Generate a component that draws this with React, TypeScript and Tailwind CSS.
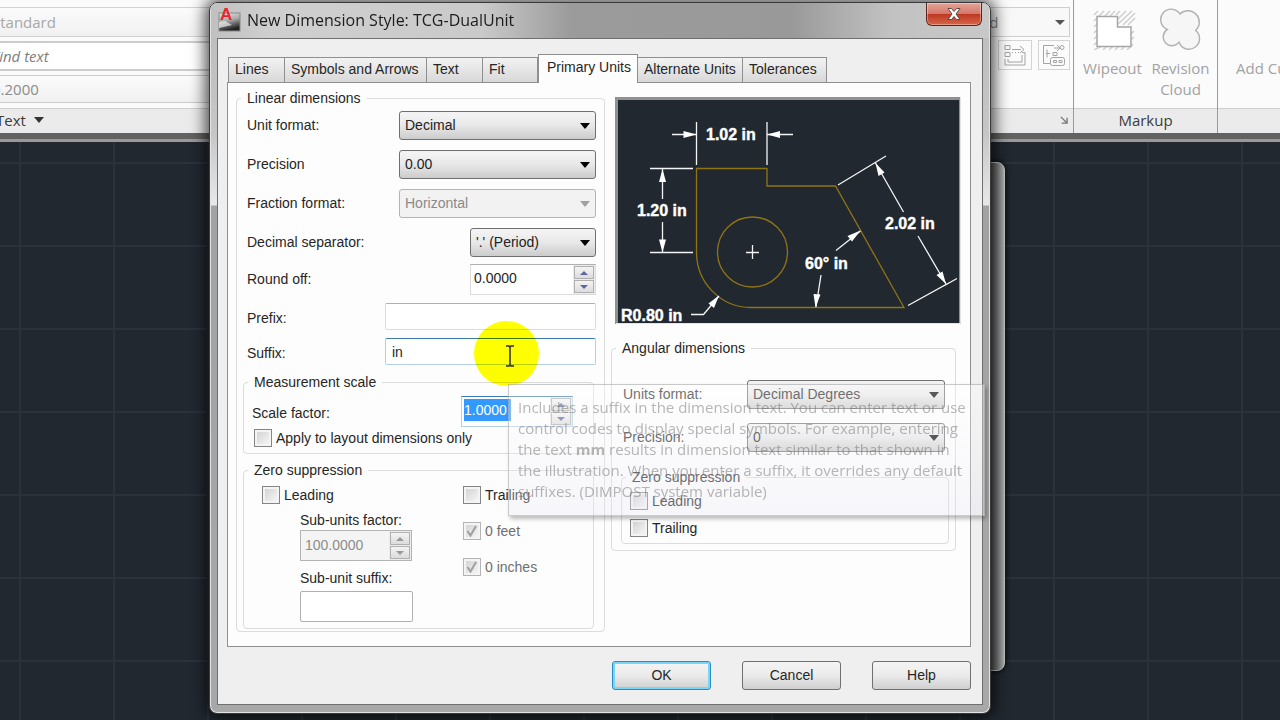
import type { ReactNode } from "react";

const FONT = "font-['Liberation_Sans',Arial,sans-serif]";
const UI_FONT = "font-['Open_Sans','Noto_Sans',sans-serif]";

function Group({ title, className = "", body, children }: { title: string; className?: string; body: string; children: ReactNode }) {
  return (
    <fieldset className={`min-w-0 rounded border border-[#dcdcdc] ${className}`}>
      <legend className="ml-1 px-1.5 leading-4">{title}</legend>
      <div className={body}>{children}</div>
    </fieldset>
  );
}

function Combo({ id, value, width, disabled }: { id: string; value: string; width: string; disabled?: boolean }) {
  return (
    <div className={`relative ${width}`}>
      <select
        id={id}
        disabled={disabled}
        defaultValue={value}
        className={`h-[29px] w-full appearance-none rounded-[3px] border pl-[5px] pr-6 outline-none ${
          disabled
            ? "border-[#b4b4b4] bg-[#f2f2f2] text-[#8a8a8a] opacity-100"
            : "border-[#707070] bg-linear-to-b from-[#f3f3f3] from-10% via-[#e8e8e8] via-50% to-[#cccccc] text-[#222]"
        }`}
      >
        <option>{value}</option>
      </select>
      <svg
        className={`pointer-events-none absolute right-1.5 top-3 ${disabled ? "fill-[#a0a0a0]" : "fill-black"}`}
        width="10"
        height="6"
        viewBox="0 0 10 6"
        aria-hidden="true"
      >
        <path d="M0 0h10L5 6z" />
      </svg>
    </div>
  );
}

function SpinButtons({ label, disabled }: { label: string; disabled?: boolean }) {
  const button = "flex h-[13px] w-5 items-center justify-center border border-[#b0b0b0] bg-linear-to-b from-[#f4f4f4] to-[#dcdcdc]";
  const arrow = disabled ? "fill-[#999]" : "fill-[#5a67a0]";
  return (
    <div className="flex shrink-0 flex-col justify-between bg-[#ececec] p-px">
      <button type="button" aria-label={`Increase ${label}`} disabled={disabled} className={button}>
        <svg className={arrow} width="8" height="4" viewBox="0 0 8 4"><path d="M0 4h8L4 0z" /></svg>
      </button>
      <button type="button" aria-label={`Decrease ${label}`} disabled={disabled} className={button}>
        <svg className={arrow} width="8" height="4" viewBox="0 0 8 4"><path d="M0 0h8L4 4z" /></svg>
      </button>
    </div>
  );
}

function Check({ label, checked, disabled }: { label: string; checked?: boolean; disabled?: boolean }) {
  return (
    <label className={`flex h-[18px] items-center gap-1 ${disabled ? "text-[#6f6f6f]" : ""}`}>
      <span className="relative flex size-[18px] shrink-0">
        <input
          type="checkbox"
          defaultChecked={checked}
          disabled={disabled}
          className={`size-[18px] appearance-none border bg-linear-to-br from-[#cfcfcf] to-[#fafafa] shadow-[inset_0_0_0_2px_#f4f4f4] ${
            disabled ? "border-[#b4b4b4]" : "border-[#858585]"
          }`}
        />
        {checked && (
          <svg className="pointer-events-none absolute inset-0" width="18" height="18" viewBox="0 0 18 18" fill="none" stroke="#a0a0a0" strokeWidth="2">
            <path d="M4.500 9l3 4.500L13 4" />
          </svg>
        )}
      </span>
      {label}
    </label>
  );
}

function Row({ id, label, height, low, children }: { id: string; label: string; height: string; low?: boolean; children: ReactNode }) {
  return (
    <div className={`flex items-center justify-between ${height}`}>
      <label htmlFor={id} className={low ? "pt-1" : ""}>{label}</label>
      {children}
    </div>
  );
}

function Preview() {
  return (
    <svg viewBox="616 97 346 227" className="block w-full" role="img" aria-label="Dimension style preview">
      <rect x="616" y="97" width="346" height="227" fill="#8c9191" />
      <rect x="619" y="100" width="341" height="223" fill="#212830" />
      <path d="M961.500 97v226.500H617" fill="none" stroke="#e4e4e4" />
      <g fill="none" stroke="#8f7414" strokeWidth="1.300">
        <path d="M697.500 252V168.500H768V186h68.500L905 307.500H752C722 307.500 697.500 283 697.500 252" />
        <circle cx="753.500" cy="252" r="35" />
      </g>
      <g fill="none" stroke="#f4f4f4" strokeWidth="1.300">
        <path d="M697.500 122v43M768 122v43M673 134.500h24M768 134.500h26" />
        <path d="M651 168.500h43M651 252.500h43M663.500 169v30M663.500 222v30" />
        <path d="M839 185l48-29M909 305.500l49-27M876.500 163l28 49M919 236l28 48" />
        <path d="M861.500 231L837 250.500M817 307l5-32M692 314.500h12.500L720 296" />
        <path d="M747 252.500h13M753.500 245v14" />
      </g>
      <g fill="#fff">
        <path d="M697.500 134.500l-13-3.500v7zM768 134.500l13-3.500v7z" />
        <path d="M663.500 169l-3.500 13h7zM663.500 252.500l-3.500-13h7z" />
        <path d="M876.500 163l3 13 6-3.500zM947 284l-9.500-9 6-3.500z" />
        <path d="M861.500 230.500l-8.500 11-4.500-5.500zM816.500 307.500l-2-13.500 7 .5zM720 295.500l-5 12.500-5.500-4.500z" />
      </g>
      <g className="font-['Liberation_Sans',Arial,sans-serif] text-[16px] font-bold" fill="#fff" stroke="#fff" strokeWidth="0.400">
        <text x="707" y="140">1.02 in</text>
        <text x="638" y="216">1.20 in</text>
        <text x="886" y="229">2.02 in</text>
        <text x="806" y="269">60° in</text>
        <text x="622" y="321">R0.80 in</text>
      </g>
    </svg>
  );
}

function RibbonTool({ label, children }: { label: ReactNode; children: ReactNode }) {
  return (
    <button type="button" className="flex w-16 flex-col items-center gap-2 text-center leading-[21px] text-[#a2a2a2]">
      {children}
      <span>{label}</span>
    </button>
  );
}

function Ribbon() {
  const strip = "flex h-[25px] items-center border-t border-[#cfcfcf] bg-[#ebebeb] pb-0.5 text-[#3c3c3c]";
  return (
    <div className={`flex h-[133px] bg-[#fbfbfc] text-[15px] ${UI_FONT}`}>
      <section className="flex min-w-0 flex-1 flex-col border-r border-[#9a9a9a]">
        <div className="flex flex-1 justify-between pt-[7px]">
          <div className="flex w-[300px] flex-col gap-1 text-[#a8a8a8]">
            <div className="flex h-[30px] items-center border-y border-[#d2d2d2] bg-linear-to-b from-[#fbfbfb] to-[#f1f1f1]">
              <span className="-ml-2">Standard</span>
            </div>
            <div className="flex h-[30px] items-center border-y-2 border-[#cccccc] bg-white italic text-[#808080]">
              <span className="-ml-2">Find text</span>
            </div>
            <div className="flex h-7 items-center border-y border-[#cccccc] bg-linear-to-b from-[#fbfbfb] to-[#f1f1f1]">
              <span className="-ml-2 text-[#8c8c8c]">0.2000</span>
            </div>
          </div>
          <div className="mr-[3px] flex w-[170px] flex-col gap-[3px]">
            <div className="flex h-[30px] items-center justify-between border border-[#cfcfcf] bg-[#f8f8f8] pl-[82px] pr-1 text-[#888]">
              <span>rd</span>
              <svg width="10" height="5" viewBox="0 0 10 5" fill="#555"><path d="M0 0h10L5 5z" /></svg>
            </div>
            <div className="flex h-[30px] justify-end gap-1.5">
              <button type="button" aria-label="Dimension break" className="flex w-[34px] items-center justify-center border border-[#d4d4d4]">
                <svg width="24" height="24" viewBox="0 0 24 24" fill="none" stroke="#a4a4a4" strokeWidth="1">
                  <path d="M2 2.500h5v4H2zM2 9.500h5v4H2zM9 6.500h9M17 3l4 3.500-4 3.500M2 16v6h20V9.500h-3M5 16v3h14v-7" />
                  <path d="M9 9.500h8" strokeDasharray="1 2" />
                </svg>
              </button>
              <button type="button" aria-label="Adjust spacing" className="flex w-8 items-center justify-center border border-[#d4d4d4]">
                <svg width="24" height="24" viewBox="0 0 24 24" fill="none" stroke="#a4a4a4" strokeWidth="1">
                  <path d="M12 2.500H1.500v18H8M5 6.500v8M4 10.500h4M11 9.500h4v3h-4zM15 2l3 3-3 3M12 5h6" />
                  <circle cx="20" cy="4.500" r="2" />
                  <rect x="8.500" y="14.500" width="14" height="8" rx="2" />
                  <path d="M11.500 17.500h3v2h-3zM17 17.500h3v2h-3z" />
                </svg>
              </button>
            </div>
          </div>
        </div>
        <div className={`${strip} justify-between pr-[5px]`}>
          <span className="-ml-1 flex items-center gap-2">
            Text
            <svg width="10" height="6" viewBox="0 0 10 6" fill="#333"><path d="M0 0h10L5 6z" /></svg>
          </span>
          <svg width="8" height="8" viewBox="0 0 9 9" fill="none" stroke="#777" strokeWidth="1.500">
            <path d="M1 1l6 6M8 2v6H2" />
          </svg>
        </div>
      </section>
      <section className="flex w-[144px] flex-col border-r border-[#9a9a9a]">
        <div className="flex flex-1 justify-center gap-1 pl-0.5 pt-2">
          <RibbonTool label="Wipeout">
            <svg width="48" height="42" viewBox="0 0 48 42" fill="none">
              <path
                d="M5 7l4-4M5 13L15 3M5 19l4-4M15 9l6-6M5 25l4-4M5 31l4-4M5 37l4-4M5 42l8-4M14 42l4-4M20 42l4-4M26 42l4-4M32 42l4-4M38 42l6-6M42 32l3-3M42 26l3-3M21 8l5-5M27 7l4-4M27 13L37 3M29 16L43 3M34 17L46 5M39 17l7-7"
                stroke="#cfcfcf"
                strokeWidth="1.500"
              />
              <path d="M8 8.500h20.500V19H42v19.500H8z" fill="#fff" stroke="#a6a6a6" strokeWidth="1.500" />
            </svg>
          </RibbonTool>
          <RibbonTool label="Revision Cloud">
            <svg width="48" height="42" viewBox="0 0 48 43" fill="#f6f6f7" stroke="#b2b2b2" strokeWidth="1.500">
              <path d="M10 22A10.800 10.800 0 1 1 23 6A11.200 11.200 0 1 1 39 23A10.800 10.800 0 1 1 22 35A9 9 0 1 1 10 22z" />
            </svg>
          </RibbonTool>
        </div>
        <div className={`${strip} justify-center`}>Markup</div>
      </section>
      <section className="flex w-[62px] flex-col overflow-hidden whitespace-nowrap">
        <div className="flex flex-1 pl-[18px] pt-[58px] leading-[21px] text-[#a2a2a2]">Add Current</div>
        <div className={strip} />
      </section>
    </div>
  );
}

const TABS = [
  { name: "Lines", width: "w-[57px]" },
  { name: "Symbols and Arrows", width: "w-[142px]" },
  { name: "Text", width: "w-[56px]" },
  { name: "Fit", width: "w-[55px]" },
  { name: "Primary Units", width: "w-[100px]", active: true },
  { name: "Alternate Units", width: "w-[105px]" },
  { name: "Tolerances", width: "w-[84px]" },
];

function Tabs() {
  return (
    <div role="tablist" className="-mb-px flex items-end pl-px">
      {TABS.map((tab) => (
        <button
          key={tab.name}
          type="button"
          role="tab"
          aria-selected={!!tab.active}
          className={`whitespace-nowrap text-left ${tab.width} ${
            tab.active
              ? "relative h-[29px] border-x border-t border-[#8e8f8f] bg-[#fdfdfd] pb-1 pl-2"
              : "h-[26px] border-y border-r border-[#8e8f8f] bg-linear-to-b from-[#f3f3f3] to-[#d8d8d8] pb-0.5 pl-1.5 first:border-l"
          }`}
        >
          {tab.name}
        </button>
      ))}
    </div>
  );
}

function LinearDimensions() {
  return (
    <Group title="Linear dimensions" className="w-[369px]" body="pb-0.5 pl-1.5 pr-2 pt-[5px]">
      <div className="flex flex-col gap-2.5 pl-1">
        <Row id="unit-format" label="Unit format:" height="h-[29px]"><Combo id="unit-format" value="Decimal" width="w-[197px]" /></Row>
        <Row id="precision" label="Precision" height="h-[29px]"><Combo id="precision" value="0.00" width="w-[197px]" /></Row>
        <Row id="fraction" label="Fraction format:" height="h-[29px]"><Combo id="fraction" value="Horizontal" width="w-[197px]" disabled /></Row>
        <Row id="separator" label="Decimal separator:" height="h-[29px]"><Combo id="separator" value="'.' (Period)" width="w-[126px]" /></Row>
      </div>
      <div className="mt-[7px] flex flex-col gap-2 pl-1">
        <Row id="round" label="Round off:" height="h-[31px]">
          <div className="flex h-[31px] w-[126px] border border-[#dcdcdc] border-t-[#b0b0b0] bg-white">
            <input id="round" defaultValue="0.0000" className="h-[26px] w-0 flex-1 bg-transparent pl-[3px] outline-none" />
            <SpinButtons label="round off" />
          </div>
        </Row>
        <Row id="prefix" label="Prefix:" height="h-[27px]" low>
          <input id="prefix" className="h-[27px] w-[211px] rounded-[2px] border border-[#dcdcdc] border-t-[#b0b0b0] bg-white px-1.5 outline-none" />
        </Row>
        <Row id="suffix" label="Suffix:" height="h-[27px]" low>
          <input id="suffix" defaultValue="in" className="h-[27px] w-[211px] rounded-[2px] border border-[#b5cfe7] border-t-[#3d7bad] bg-white px-1.5 outline-none" />
        </Row>
      </div>

      <Group title="Measurement scale" className="mr-0.5 mt-[9px]" body="pb-1.5 pl-2 pr-5 pt-1.5">
        <Row id="scale" label="Scale factor:" height="h-[31px]" low>
          <div className="flex h-[31px] w-[112px] justify-between border border-[#b5cfe7] border-t-[#3d7bad] bg-white pl-0.5">
            <input id="scale" defaultValue="1.0000" className="mt-0.5 h-[22px] w-[47px] bg-[#3399ff] text-white outline-none" />
            <SpinButtons label="scale factor" />
          </div>
        </Row>
        <div className="pl-0.5 pt-0.5"><Check label="Apply to layout dimensions only" /></div>
      </Group>

      <Group title="Zero suppression" className="mr-0.5 mt-2" body="pb-1.5 pl-[18px] pt-2">
        <div className="flex">
          <div className="w-[201px]">
            <Check label="Leading" />
            <div className="flex flex-col pl-[38px] pt-2">
              <label htmlFor="sub-factor" className="leading-4">Sub-units factor:</label>
              <div className="mt-0.5 flex h-[31px] w-[112px] border border-[#b4b4b4] bg-[#f4f4f4]">
                <input id="sub-factor" disabled defaultValue="100.0000" className="h-[27px] w-0 flex-1 bg-transparent pl-1 text-[#8c8c8c] outline-none" />
                <SpinButtons label="sub-units factor" disabled />
              </div>
              <label htmlFor="sub-suffix" className="mt-[9px] leading-4">Sub-unit suffix:</label>
              <input id="sub-suffix" className="mt-[5px] h-[31px] w-[113px] rounded-[2px] border border-[#b0b0b0] bg-white px-1 outline-none" />
            </div>
          </div>
          <div className="flex flex-col gap-[18px]">
            <Check label="Trailing" />
            <Check label="0 feet" checked disabled />
            <Check label="0 inches" checked disabled />
          </div>
        </div>
      </Group>
    </Group>
  );
}

function AngularDimensions() {
  return (
    <Group title="Angular dimensions" className="mt-4 w-[345px]" body="px-1.5 pb-1.5 pt-6">
      <div className="flex flex-col gap-3.5 pl-[5px] pr-1">
        <Row id="ang-format" label="Units format:" height="h-[29px]"><Combo id="ang-format" value="Decimal Degrees" width="w-[198px]" /></Row>
        <Row id="ang-precision" label="Precision:" height="h-[29px]"><Combo id="ang-precision" value="0" width="w-[198px]" /></Row>
      </div>
      <Group title="Zero suppression" className="ml-[3px] mt-[17px]" body="flex flex-col gap-[9px] pb-1.5 pl-2 pt-[7px]">
        <Check label="Leading" />
        <Check label="Trailing" />
      </Group>
    </Group>
  );
}

function HelpTip() {
  return (
    <div
      role="tooltip"
      className={`pointer-events-none absolute left-[298px] top-[381px] h-[132px] w-[477px] border border-[#9a9a9a]/50 bg-linear-to-b from-white/35 to-[#e9e9f4]/35 pl-[9px] pt-3 text-[15px] leading-[21px] whitespace-nowrap text-[#707070]/50 shadow-[2px_3px_4px_rgba(0,0,0,0.25)] ${UI_FONT}`}
    >
      Includes a suffix in the dimension text. You can enter text or use
      <br />
      control codes to display special symbols. For example, entering
      <br />
      the text <b>mm</b> results in dimension text similar to that shown in
      <br />
      the illustration. When you enter a suffix, it overrides any default
      <br />
      suffixes. (DIMPOST system variable)
    </div>
  );
}

function Dialog() {
  const action = "h-[29px] w-[99px] rounded-[3px] border bg-linear-to-b from-[#f4f4f4] via-[#ebebeb] via-50% to-[#cfcfcf]";
  return (
    <div className="relative isolate">
      <div className="absolute -right-[14px] bottom-[43px] top-40 -z-10 w-8 rounded-lg border border-[#c4c8c6] bg-linear-to-r from-[#444] from-50% to-[#aeb2b0] shadow-[0_0_6px_#000]" />
      <div
        role="dialog"
        aria-labelledby="dialog-title"
        className="relative w-[782px] rounded-lg border border-[#3a3a3a] bg-[linear-gradient(to_bottom,#bcbcbc_0px,#c6c6c6_130px,#e8e8e8_202px,#a2a2a2_203px,#a8a8a8_100%)] px-[7px] pb-2 shadow-[0_0_16px_3px_rgba(0,0,0,0.75),inset_0_0_0_1px_#e2e2e2]"
      >
        <header className="-mx-1.5 flex h-[35px] items-start justify-between rounded-t-md bg-[linear-gradient(to_right,#c0c0c0_0px,#cfcfcf_60px,#cacaca_270px,#9b9b9b_360px,#999_580px,#c2c2c2_680px,#c8c8c8_100%)] pl-[7px]">
          <div className="flex items-center gap-1.5 pt-1">
            <svg width="23" height="25" viewBox="0 0 23 25" aria-hidden="true">
              <defs>
                <linearGradient id="icon-shade" x1="0" y1="0" x2="0.300" y2="1">
                  <stop offset="0" stopColor="#e8e8e8" />
                  <stop offset="0.500" stopColor="#a9a9a9" />
                  <stop offset="1" stopColor="#222" />
                </linearGradient>
              </defs>
              <rect x="1" y="6" width="21" height="18" fill="url(#icon-shade)" stroke="#888" />
              <path d="M1 15l6-1 7 4-13 3z" fill="#eee" opacity="0.700" />
              <text x="2" y="13" fontSize="17" fontWeight="bold" fill="#e8262b" className={FONT}>A</text>
            </svg>
            <h1 id="dialog-title" className={`text-[16px] leading-6 text-[#1c1c1c] ${UI_FONT}`}>New Dimension Style: TCG-DualUnit</h1>
          </div>
          <button
            type="button"
            aria-label="Close"
            className="mr-[7px] flex h-[23px] w-14 items-center justify-center rounded-b-md border border-t-0 border-[#5c2620] bg-[linear-gradient(to_bottom,#e3a598_0%,#d4776a_48%,#bd3822_52%,#d6664a_100%)] shadow-[inset_0_0_0_1px_rgba(255,255,255,0.35)]"
          >
            <svg width="16" height="14" viewBox="0 0 16 14">
              <path d="M2 1.500h3.500L8 4.500l2.500-3H14L10 7l4 5.500h-3.500L8 9.500l-2.500 3H2L6 7z" fill="#fff" stroke="#5a4a4a" strokeWidth="1" />
            </svg>
          </button>
        </header>

        <div className="border border-[#6f6f6f] bg-[#efefef] pb-3.5 pl-[9px] pr-[11px] pt-[15px]">
          <Tabs />
          <div role="tabpanel" className="flex gap-1.5 border border-[#8e8f8f] bg-[#fdfdfd] pb-3.5 pl-2 pt-[7px]">
            <LinearDimensions />
            <div>
              <div className="ml-1 mt-[7px] w-[346px]"><Preview /></div>
              <AngularDimensions />
            </div>
          </div>
          <div className="mt-3.5 flex justify-end gap-[31px]">
            <button type="button" className={`${action} border-[#2a8dc0] shadow-[inset_0_0_0_2px_#7ad4f5]`}>OK</button>
            <button type="button" className={`${action} border-[#707070]`}>Cancel</button>
            <button type="button" className={`${action} border-[#707070]`}>Help</button>
          </div>
        </div>

        <div className="pointer-events-none absolute left-[264px] top-[318px] size-[65px] rounded-full bg-[#ffff00] mix-blend-multiply" />
        <svg className="pointer-events-none absolute left-[295px] top-[342px]" width="10" height="22" viewBox="0 0 10 22" fill="none" stroke="#2b2b2b" strokeWidth="1.500" aria-hidden="true">
          <path d="M1 1h3l1 1 1-1h3M5 2v18M1 21h3l1-1 1 1h3" />
        </svg>
        <HelpTip />
      </div>
    </div>
  );
}

export default function App() {
  return (
    <main className={`grid h-screen overflow-hidden bg-[#212830] text-[14px] text-[#262626] ${FONT}`}>
      <div className="col-start-1 row-start-1 flex min-w-0 flex-col">
        <Ribbon />
        <div className="h-[9px] border-b-[3px] border-[#9a9a9a] bg-[#626262]" />
        <div className="flex-1 bg-[#212830] bg-[linear-gradient(to_right,#2b323b_2px,transparent_2px),linear-gradient(to_bottom,#2b323b_2px,transparent_2px)] bg-size-[94px_83px] bg-position-[19px_20px]" />
      </div>
      <div className="col-start-1 row-start-1 flex items-start justify-center pr-20 pt-0.5">
        <Dialog />
      </div>
    </main>
  );
}
